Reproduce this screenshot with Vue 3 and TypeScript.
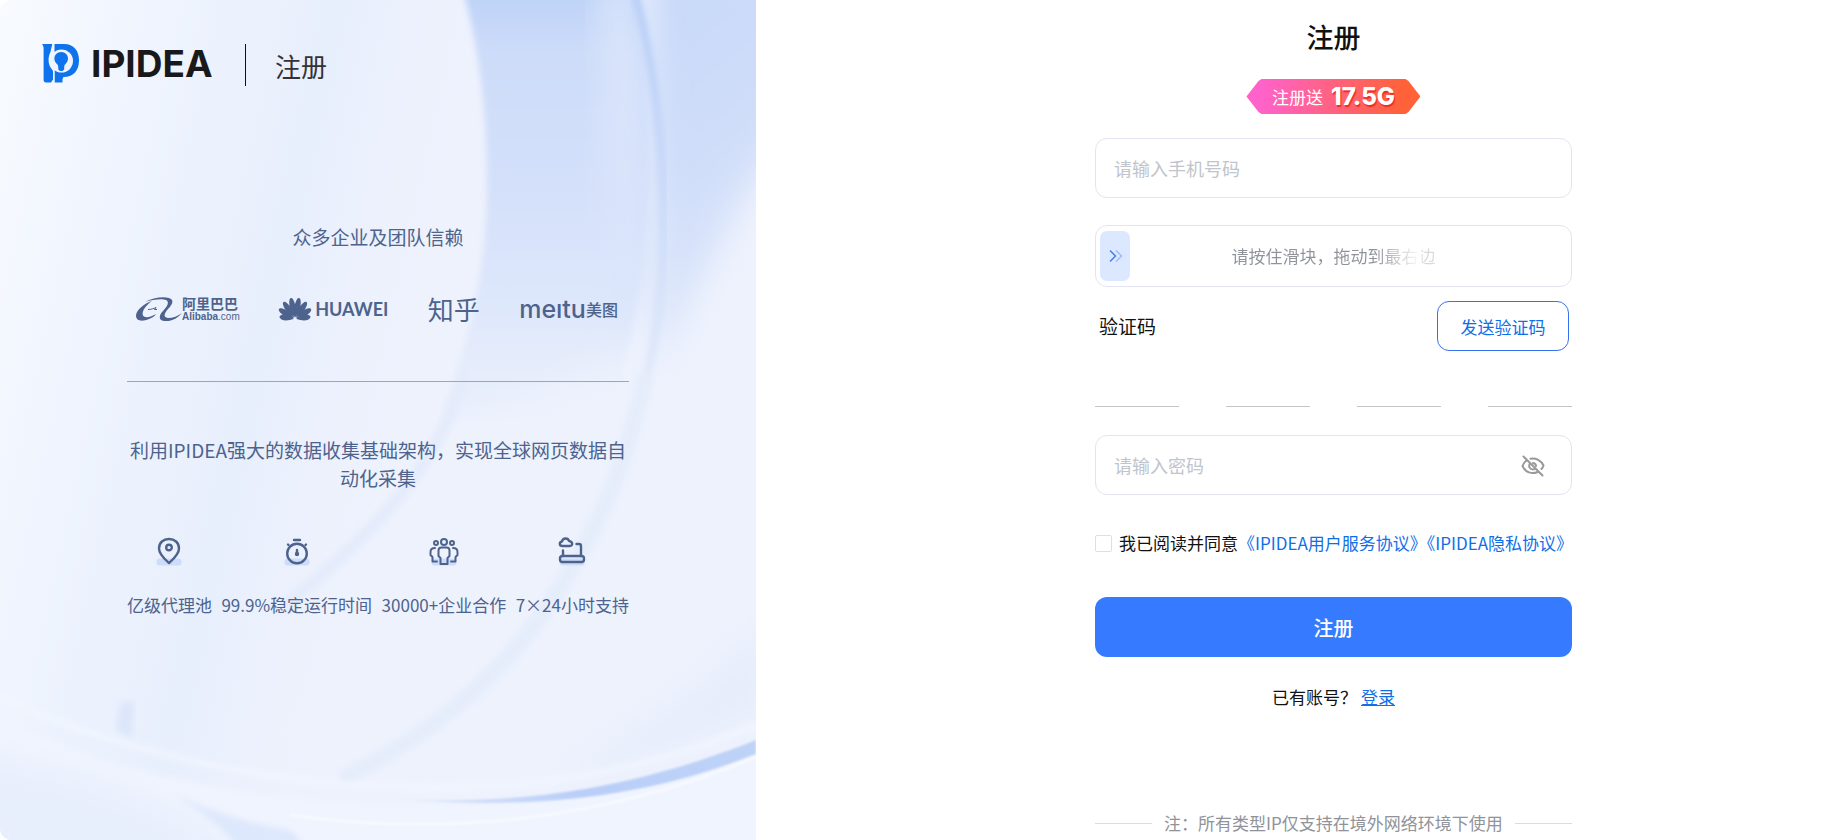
<script setup lang="ts">
import { computed, ref } from 'vue'

const phone = ref('')
const password = ref('')
const showPassword = ref(false)
const agreed = ref(false)
const slide = ref(0)
const code = ref<string[]>(['', '', '', ''])

const arrowStyle = computed(() => ({
  left: `calc(${slide.value}% - ${(slide.value / 100) * 30}px)`,
}))

const petals = [
  { angle: -82, size: 0.76 },
  { angle: -58, size: 0.92 },
  { angle: -34, size: 1 },
  { angle: -11, size: 1.04 },
  { angle: 11, size: 1.04 },
  { angle: 34, size: 1 },
  { angle: 58, size: 0.92 },
  { angle: 82, size: 0.76 },
]

const stats = [
  { icon: 'pin', label: '亿级代理池' },
  { icon: 'timer', label: '99.9%稳定运行时间' },
  { icon: 'team', label: '30000+企业合作' },
  { icon: 'support', label: '7×24小时支持' },
]
</script>

<template>
  <div class="page">
    <aside class="promo">
      <svg class="backdrop" viewBox="0 0 756 840" preserveAspectRatio="none" aria-hidden="true">
        <defs>
          <linearGradient id="base" x1="0" y1="0" x2="1" y2="0.25">
            <stop offset="0" stop-color="#f8fbff" />
            <stop offset="0.2" stop-color="#eff4fe" />
            <stop offset="0.42" stop-color="#e8effc" />
            <stop offset="0.6" stop-color="#eef2fd" />
            <stop offset="1" stop-color="#eef2fd" />
          </linearGradient>
          <linearGradient id="band" x1="0" y1="0" x2="0" y2="1">
            <stop offset="0" stop-color="#bdd2f8" />
            <stop offset="0.15" stop-color="#cddcf9" />
            <stop offset="0.5" stop-color="#d5e1fa" />
            <stop offset="0.75" stop-color="#dfe8fb" />
            <stop offset="1" stop-color="#ebf0fc" />
          </linearGradient>
          <linearGradient id="corner" x1="0" y1="0" x2="0.3" y2="1">
            <stop offset="0" stop-color="#c6d8f9" />
            <stop offset="0.5" stop-color="#cfddf9" />
            <stop offset="1" stop-color="#e0e9fb" />
          </linearGradient>
          <linearGradient id="rim" x1="0" y1="0" x2="0" y2="1">
            <stop offset="0" stop-color="#b7cef8" />
            <stop offset="0.5" stop-color="#c9d9f8" />
            <stop offset="1" stop-color="#e2eafa" />
          </linearGradient>
          <linearGradient id="crescent" x1="0" y1="0" x2="1" y2="0">
            <stop offset="0" stop-color="#e2eafb" />
            <stop offset="0.5" stop-color="#b9cef8" />
            <stop offset="1" stop-color="#bfd3f8" />
          </linearGradient>
          <filter id="soft"><feGaussianBlur stdDeviation="3" /></filter>
          <filter id="fine"><feGaussianBlur stdDeviation="1" /></filter>
          <filter id="softer" x="-30%" y="-30%" width="160%" height="160%"><feGaussianBlur stdDeviation="16" /></filter>
        </defs>
        <rect width="756" height="840" fill="url(#base)" />
        <path filter="url(#soft)" fill="url(#band)" d="M463-10C482 60 487 120 487 198C484 290 465 350 440 420L610 420C660 260 655 90 632-10Z" />
        <path filter="url(#softer)" fill="#edf2fd" d="M480 420L640 350L660 520L500 700L260 760L420 500Z" />
        <path filter="url(#softer)" fill="#dae5fb" d="M600-20L630-20C655 100 655 240 636 330L610 280Z" />
        <path filter="url(#softer)" fill="url(#corner)" d="M650-30H800V130C755 160 720 250 655 370Z" />
        <path filter="url(#soft)" fill="none" stroke="url(#rim)" stroke-width="9" d="M634-10C656 70 664 150 664 233C664 290 656 340 645 385" />
        <path filter="url(#soft)" fill="none" stroke="#e5edfb" stroke-width="16" d="M645 375C628 460 600 530 545 610C490 690 420 740 340 780" />
        <path filter="url(#soft)" fill="none" stroke="#e4ebfb" stroke-width="12" d="M466 370C440 460 390 520 280 610" />
        <path filter="url(#softer)" fill="#e6edfb" d="M770 620C700 690 640 730 550 780L620 770L770 710Z" />
        <path filter="url(#soft)" fill="#dbe6fa" d="M121 702H134L132 738L116 730Z" />
        <path filter="url(#soft)" fill="#f0f4fe" d="M-10 716C120 775 260 806 430 806C560 806 680 780 766 744V850H-10Z" />
        <path filter="url(#softer)" fill="#e8effc" d="M-30 750C90 775 160 790 230 850L200 880H-30Z" />
        <path filter="url(#soft)" fill="none" stroke="#f2f6fe" stroke-width="5" d="M-10 692C110 750 270 788 440 788C570 788 680 758 770 720" />
        <path filter="url(#fine)" fill="url(#crescent)" d="M400 799C540 806 650 782 756 740V754C660 792 550 812 400 799Z" />
        <path filter="url(#soft)" fill="#dde8fc" d="M170 792C210 812 250 824 290 830L310 850H240C220 825 200 810 170 792Z" />
        <path filter="url(#fine)" fill="none" stroke="#f9fbff" stroke-width="2" d="M290 815C450 838 610 818 756 757" />
      </svg>

      <header class="brand">
        <svg class="mark" viewBox="0 0 37 39" aria-hidden="true">
          <path fill="#0f73ee" d="M0 0H10.5C9.600 3 9 5 8.500 8C6.500 12 5.700 17 8 22.500L11 27V35.500L9 38.500H4C2.500 38.500 1.600 37.500 1.600 36V4C1.600 2.500 .8 1 0 0Z" />
          <path fill="#0f73ee" d="M12 0H22C32 0 37 7 37 16.500C37 27 31 33 21.500 33L20.500 35V38.500H12.500V0Z" />
          <circle cx="19.500" cy="17" r="11.500" fill="#eff4fe" />
          <path fill="none" stroke="#eff4fe" stroke-width="1.400" d="M11.300-1C10.300 5 10.500 6 10.500 10M11.800 25V39" />
          <path fill="#0f73ee" d="M19.200 8C23.500 8 26 11 26 14.500C26 17.500 24.500 19 23 20.500C22.200 21.500 22.200 22.500 22.200 25.500L20.500 27H18L16.300 25.500C16.300 22.500 16.200 21.500 15.400 20.500C13.800 19 12.400 17.500 12.400 14.500C12.400 11 15 8 19.200 8Z" />
        </svg>
        <strong class="wordmark">IPIDEA</strong>
        <span class="brand-page">注册</span>
      </header>

      <div class="promo-body">
        <h2 class="trust">众多企业及团队信赖</h2>
        <div class="partners">
          <div class="partner">
            <svg class="alibaba-mark" viewBox="0 0 46 24" aria-hidden="true">
              <path fill="currentColor" d="M16 4C9 6 0 13 0 18.500C0 24 6 25 13 22C16 21 19 19 20 17C15 20 9 21.500 7 18.500C5.500 15 9 9 16 4Z" />
              <path fill="currentColor" d="M9 5C16 1 27-1 33 1C39 3 36 8 32 12C28 17 27 20 32 21C37 21 42 19 46 16C41 22 34 25 28 24C22 23 23 18 27 14C31 10 34 5 30 3C26 1.500 17 2.500 9 5Z" />
              <path fill="none" stroke="currentColor" stroke-width="1" d="M12 12.500C15 12.500 18 11.500 20 10.500L18.500 12.500H21" />
            </svg>
            <div class="alibaba-text">
              <span class="alibaba-cn">阿里巴巴</span>
              <span class="alibaba-en"><b>Alibaba</b>.com</span>
            </div>
          </div>
          <div class="partner huawei">
            <svg class="huawei-mark" viewBox="0 0 32 24" aria-hidden="true">
              <path
                v-for="petal in petals"
                :key="petal.angle"
                fill="currentColor"
                d="M0-1.500C-2.600-8-3.600-13-2.300-17.500C-1.500-20-.8-20.500 0-20.500S1.500-20 2.300-17.500C3.600-13 2.600-8 0-1.500Z"
                :transform="`translate(16 22) rotate(${petal.angle}) scale(1 ${petal.size})`"
              />
            </svg>
            <span class="huawei-text">HUAWEI</span>
          </div>
          <span class="partner zhihu">知乎</span>
          <div class="partner meitu"><span class="meitu-en">meıtu</span><span class="meitu-cn">美图</span></div>
        </div>
        <p class="pitch">利用IPIDEA强大的数据收集基础架构，实现全球网页数据自动化采集</p>
        <ul class="stats">
          <li v-for="stat in stats" :key="stat.icon">
            <svg class="stat-icon" viewBox="0 0 30 30" fill="none" stroke="currentColor" stroke-width="2.400" stroke-linecap="round" stroke-linejoin="round" aria-hidden="true">
              <rect x="2.500" y="22.500" width="25" height="7" rx="3" fill="#cddcf9" stroke="none" />
              <template v-if="stat.icon === 'pin'">
                <path d="M15 27C11 23.500 5 18.500 5 12.500C5 6.500 9.500 3 15 3S25 6.500 25 12.500C25 18.500 19 23.500 15 27Z" />
                <circle cx="15" cy="11.500" r="2.800" />
              </template>
              <template v-else-if="stat.icon === 'timer'">
                <circle cx="15" cy="17.500" r="9.800" />
                <path d="M12 4H18M6 8.500L6.500 9M24 8.500L23.500 9M15 14V18" />
                <circle cx="15" cy="18" r="1" fill="currentColor" />
              </template>
              <template v-else-if="stat.icon === 'team'">
                <g stroke-width="2">
                  <circle cx="15" cy="6" r="3" />
                  <circle cx="7" cy="7" r="2" />
                  <circle cx="23" cy="7" r="2" />
                  <path d="M12.500 11.500H17.500C19.500 11.500 20.500 12.500 20.500 14.500V20L18.500 22V28H11.500V22L9.500 20V14.500C9.500 12.500 10.500 11.500 12.500 11.500ZM6 12C3 12 1.500 13.500 1.500 16V19L3.500 21V25.500H8M24 12C27 12 28.500 13.500 28.500 16V19L26.500 21V25.500H22" />
                </g>
              </template>
              <template v-else>
                <path d="M5.500 10C2 10 2 6 5 5.500C6 1.500 11 1.500 12 5C16 5.500 16 10 13 10ZM19.500 8H22C23 8 24 9 24 10V20M6 14.500V20" />
                <rect x="3" y="20" width="24" height="6" rx="2.500" />
              </template>
            </svg>
            <span>{{ stat.label }}</span>
          </li>
        </ul>
      </div>
    </aside>

    <main class="content">
      <form class="form" @submit.prevent>
        <h1>注册</h1>
        <div class="badge"><span>注册送</span><strong>17.5G</strong></div>

        <input v-model="phone" class="field" type="tel" placeholder="请输入手机号码" aria-label="手机号码" />

        <div class="slider">
          <input v-model.number="slide" type="range" min="0" max="100" aria-labelledby="slide-hint" />
          <span id="slide-hint" class="slide-hint">请按住滑块，拖动到最右边</span>
          <div class="arrow-track">
            <svg class="arrow" :style="arrowStyle" viewBox="0 0 30 50" fill="none" stroke-width="1.500" aria-hidden="true">
              <path stroke="#9dbcf8" d="M16 19.500L21.500 25L16 30.500" />
              <path stroke="#447df0" d="M10 19.500L15.500 25L10 30.500" />
            </svg>
          </div>
        </div>

        <div class="verify">
          <label for="code-0">验证码</label>
          <button type="button" class="send">发送验证码</button>
        </div>
        <div class="code">
          <input v-for="(_, i) in code" :id="`code-${i}`" :key="i" v-model="code[i]" maxlength="1" inputmode="numeric" :aria-label="`验证码第${i + 1}位`" />
        </div>

        <div class="password">
          <input v-model="password" class="field" :type="showPassword ? 'text' : 'password'" placeholder="请输入密码" aria-label="密码" />
          <button type="button" class="eye" aria-label="显示密码" @click="showPassword = !showPassword">
            <svg viewBox="0 0 24 24" fill="none" stroke="#999" stroke-width="2" stroke-linecap="round" aria-hidden="true">
              <path d="M9.500 4.700C15 3.600 20.200 6.500 22.500 11.500C22 13 21.200 14.200 20.500 15M16.500 18C11 20.600 4.500 18.500 1.500 12C2.300 9.500 3.800 7.600 5.800 6.400M9 9.500C7 12.500 9 15.500 12 15.500C13 15.500 13.800 15.200 14.500 14.600M12 9C14 9.500 15 10.500 15 12M2.500 2.500L21.500 21.500" />
            </svg>
          </button>
        </div>

        <div class="agreement">
          <input id="agree" v-model="agreed" type="checkbox" />
          <div><label for="agree">我已阅读并同意</label><a href="#terms">《IPIDEA用户服务协议》</a><a href="#privacy">《IPIDEA隐私协议》</a></div>
        </div>

        <button type="submit" class="submit">注册</button>
        <p class="login">已有账号？<a href="#login">登录</a></p>
        <p class="note">注：所有类型IP仅支持在境外网络环境下使用</p>
      </form>
    </main>
  </div>
</template>

<style>
body {
  margin: 0;
  background: #fff;
}
</style>

<style scoped>
* {
  box-sizing: border-box;
}

.page {
  display: flex;
  min-height: 100vh;
  color: #111;
  font-family: "Noto Sans CJK SC", "Noto Sans", sans-serif;
  font-size: 17px;
  line-height: 24px;
}

h1,
h2,
p,
ul {
  margin: 0;
  padding: 0;
  font-weight: 400;
}

button,
input {
  font-family: inherit;
}

a {
  color: #0f6fe8;
  text-decoration: none;
}

.promo {
  position: relative;
  flex: 0 0 41.4%;
  overflow: hidden;
  border-radius: 12px 0 0 12px;
  color: #4d638d;
}

.backdrop {
  position: absolute;
  inset: 0;
  width: 100%;
  height: 100%;
}

.brand {
  position: relative;
  display: flex;
  align-items: flex-start;
  padding: 44px 0 0 42px;
}

.mark {
  width: 37px;
  height: 39px;
}

.wordmark {
  width: 120px;
  margin: 0 34px 0 12px;
  color: #19191c;
  font-family: Inter, sans-serif;
  font-size: 37px;
  font-weight: 700;
  line-height: 40px;
}

.brand-page {
  padding: 2px 0 0 29px;
  border-left: 1px solid #111;
  color: #333;
  font-size: 26px;
  line-height: 40px;
}

.promo-body {
  position: relative;
  width: 502px;
  max-width: 100%;
  margin: 137px auto 0;
}

.trust {
  font-size: 19px;
  line-height: 28px;
  text-align: center;
}

.partners {
  display: flex;
  align-items: center;
  justify-content: space-between;
  height: 131px;
  padding: 0 11px 15px 9px;
  border-bottom: 1px solid #92a6d0;
}

.partner {
  display: flex;
  align-items: center;
}

.alibaba-mark {
  width: 46px;
  height: 24px;
}

.alibaba-text {
  display: flex;
  flex-direction: column;
}

.alibaba-cn {
  font-size: 14px;
  font-weight: 700;
  line-height: 17px;
}

.alibaba-en {
  font-family: "Liberation Sans", sans-serif;
  font-size: 10px;
  line-height: 10px;
}

.huawei {
  gap: 4px;
}

.huawei-mark {
  width: 32px;
  height: 24px;
  overflow: visible;
}

.huawei-text {
  font-family: Lato, sans-serif;
  font-size: 18px;
  font-weight: 700;
}

.zhihu {
  font-size: 26px;
}

.meitu-en {
  font-family: Inter, sans-serif;
  font-size: 25px;
  font-weight: 500;
}

.meitu-cn {
  font-size: 16px;
  font-weight: 500;
}

.pitch {
  margin-top: 54px;
  font-size: 19px;
  line-height: 28px;
  text-align: center;
}

.stats {
  display: flex;
  justify-content: space-between;
  margin-top: 44px;
  list-style: none;
}

.stats li {
  display: flex;
  flex-direction: column;
  align-items: center;
  gap: 27px;
  white-space: nowrap;
}

.stat-icon {
  width: 30px;
  height: 30px;
  overflow: visible;
}

.content {
  display: flex;
  flex: 1;
  justify-content: center;
  padding: 17px 0 0 85px;
}

.form {
  display: flex;
  flex-direction: column;
  width: 477px;
}

h1 {
  font-size: 27px;
  font-weight: 500;
  line-height: 40px;
  text-align: center;
}

.badge {
  display: flex;
  align-items: center;
  align-self: center;
  justify-content: center;
  gap: 8px;
  width: 174px;
  height: 35px;
  margin: 22px 0 24px;
  clip-path: polygon(0 50%, 12px 2px, 15px 0, 159px 0, 162px 2px, 100% 50%, 162px 33px, 159px 100%, 15px 100%, 12px 33px);
  background: linear-gradient(90deg, #ff62c8 10%, #ff6238 90%);
  color: #fff;
}

.badge strong {
  font-family: Inter, sans-serif;
  font-size: 24px;
  font-weight: 800;
  text-shadow: 1px 2px 1px #f12c24;
}

.field {
  display: block;
  width: 100%;
  height: 60px;
  padding: 0 18px;
  border: 1px solid #e2e5f1;
  border-radius: 12px;
  outline: none;
  background: #fff;
  color: #111;
  font-size: 18px;
}

.field::placeholder {
  color: #c0c4cc;
  opacity: 1;
}

.slider {
  position: relative;
  display: grid;
  align-items: center;
  height: 62px;
  margin-top: 27px;
  padding: 0 4px;
  border: 1px solid #e2e5f1;
  border-radius: 12px;
}

.slider input {
  grid-area: 1 / 1;
  width: 100%;
  height: 50px;
  margin: 0;
  appearance: none;
  background: transparent;
}

.slider input::-webkit-slider-thumb {
  width: 30px;
  height: 50px;
  appearance: none;
  border-radius: 7px;
  background: #dce8ff;
}

.slide-hint {
  grid-area: 1 / 1;
  justify-self: center;
  background: linear-gradient(90deg, #8f9399 70%, #fff 93%, #d5d5d5 94%, #ddd);
  background-clip: text;
  color: transparent;
  pointer-events: none;
}

.arrow-track {
  position: relative;
  grid-area: 1 / 1;
  height: 50px;
  pointer-events: none;
}

.arrow {
  position: absolute;
  top: 0;
  width: 30px;
  height: 50px;
}

.verify {
  display: flex;
  align-items: center;
  justify-content: space-between;
  margin-top: 14px;
  padding: 0 3px 0 4px;
}

.verify label {
  font-size: 19px;
}

.send {
  width: 132px;
  height: 50px;
  padding: 0;
  border: 1px solid #3670ee;
  border-radius: 12px;
  background: #fff;
  color: #0f6fe8;
  font-size: 17px;
}

.code {
  display: flex;
  gap: 47px;
  margin: 16px 0 28px;
}

.code input {
  flex: 1;
  min-width: 0;
  height: 40px;
  padding: 0;
  border: 0;
  border-bottom: 1px solid #c4c4c4;
  outline: none;
  font-size: 20px;
  text-align: center;
}

.password {
  position: relative;
}

.eye {
  position: absolute;
  top: 19px;
  right: 27px;
  width: 24px;
  height: 24px;
  padding: 0;
  border: 0;
  background: none;
}

.eye svg {
  display: block;
}

.agreement {
  display: flex;
  align-items: center;
  margin-top: 36px;
  white-space: nowrap;
}

.agreement input {
  flex: none;
  width: 17px;
  height: 17px;
  margin: 0 7px 0 0;
  appearance: none;
  border: 1px solid #dcdfe6;
  border-radius: 2px;
}

.agreement input:checked {
  background: #367bff;
}

.submit {
  height: 60px;
  margin-top: 42px;
  border: 0;
  border-radius: 12px;
  background: #367bff;
  color: #fff;
  font-size: 20px;
  font-weight: 500;
}

.login {
  margin-top: 28px;
  text-align: center;
}

.login a {
  margin-left: 4px;
  text-decoration: underline;
}

.note {
  display: flex;
  align-items: center;
  gap: 12px;
  margin: 102px 0 5px;
  color: #909399;
  white-space: nowrap;
}

.note::before,
.note::after {
  flex: 1;
  height: 1px;
  background: #dcdcdc;
  content: "";
}
</style>
